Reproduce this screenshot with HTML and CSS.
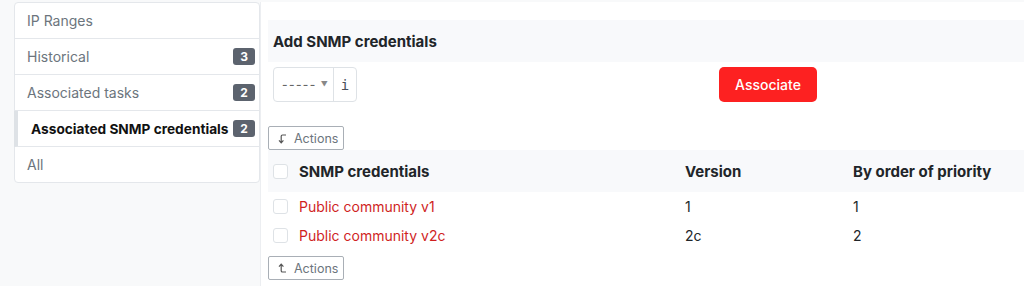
FILE: index.html
```html
<!DOCTYPE html>
<html lang="en">
<head>
  <meta charset="UTF-8" />
  <title>SNMP credentials</title>
  <link rel="stylesheet" href="styles.css">
</head>
<body>

<div class="layout">
  <!-- Side menu -->
  <div class="side">
    <div class="nav-list">
      <a class="nav-item" href="#">IP Ranges</a>
      <a class="nav-item" href="#">Historical <span class="badge">3</span></a>
      <a class="nav-item" href="#">Associated tasks <span class="badge">2</span></a>
      <a class="nav-item active" href="#">Associated SNMP credentials <span class="badge">2</span></a>
      <a class="nav-item" href="#">All</a>
    </div>
  </div>

  <!-- Main panel -->
  <div class="main">
    <div class="card-head">Add SNMP credentials</div>
    <div class="assoc-row">
      <div class="select-group">
        <div class="select"><span class="dashes">-----</span><span class="caret">&#9660;</span></div>
        <div class="info">i</div>
      </div>
      <div><button class="btn-red">Associate</button></div>
    </div>

    <button class="btn-actions top">
      <svg width="9" height="11" viewBox="0 0 9 11"><path d="M8 2H4.5Q3.2 2 3.2 3.3V9.6M1 7.4L3.2 9.8L5.4 7.4" fill="none" stroke="#555" stroke-width="1.2"/></svg>
      Actions
    </button>

    <table class="list">
      <tr class="head">
        <th class="chk"><span class="box"></span></th>
        <th class="c-name">SNMP credentials</th>
        <th class="c-ver">Version</th>
        <th>By order of priority</th>
      </tr>
      <tr>
        <td class="chk"><span class="box"></span></td>
        <td><a href="#">Public community v1</a></td>
        <td>1</td>
        <td>1</td>
      </tr>
      <tr>
        <td class="chk"><span class="box"></span></td>
        <td><a href="#">Public community v2c</a></td>
        <td>2c</td>
        <td>2</td>
      </tr>
    </table>

    <button class="btn-actions bottom">
      <svg width="9" height="11" viewBox="0 0 9 11"><path d="M3.2 1.2V7.7Q3.2 9 4.5 9H8M1 3.6L3.2 1.2L5.4 3.6" fill="none" stroke="#555" stroke-width="1.2"/></svg>
      Actions
    </button>
  </div>
</div>

</body>
</html>
```

FILE: styles.css
```css
body { background:#f8f9fa; color:#212529; font-family:Inter, "Noto Sans", sans-serif; margin:0; }
.layout { display:flex; padding-top:2px; }

.side { width:246px; margin-left:14px; flex-shrink:0; }
.nav-list { background:#fff; border:1px solid #e4e7eb; border-radius:4px; }
.nav-item { display:flex; justify-content:space-between; align-items:center; height:35px; padding:0 4px 0 12px; border-bottom:1px solid #e4e7eb; color:#6c757d; text-decoration:none; font-size:14px; white-space:nowrap; }
.nav-item:last-child { border-bottom:none; }
.nav-item.active { border-left:4px solid #dee2e6; margin-left:-1px; padding-left:13px; color:#111; font-weight:700; font-size:13.7px; }
.badge { background:#5c636e; color:#fff; font-size:12px; font-weight:700; border-radius:3px; width:22px; height:17px; display:flex; align-items:center; justify-content:center; }

.main { flex:1; background:#fff; border-left:1px solid #eceef1; padding:18px 0 0 7px; min-height:284px; box-sizing:border-box; }
.card-head { background:#f8f9fb; height:42px; padding-left:5px; display:flex; align-items:center; font-size:15px; font-weight:700; }

.assoc-row { display:grid; grid-template-columns:446px auto; padding:5px 0 0 5px; }
.select-group { display:flex; height:35px; width:84px; box-sizing:border-box; border:1px solid #dee2e6; border-radius:4px; }
.select { width:60px; display:flex; align-items:center; padding-left:8px; gap:4px; border-right:1px solid #dee2e6; box-sizing:border-box; }
.dashes { color:#666; font-size:12px; font-weight:500; letter-spacing:1.4px; }
.caret { font-size:7px; color:#888; }
.info { flex:1; display:flex; align-items:center; justify-content:center; font-family:"DejaVu Sans Mono", monospace; font-size:14px; color:#4a5058; }
.btn-red { background:#fd2121; color:#fff; border:none; border-radius:5px; width:98px; height:35px; font-family:Inter, sans-serif; font-size:14px; font-weight:500; }

.btn-actions { display:flex; align-items:center; gap:7px; height:24px; width:76px; padding:0 0 0 9px; background:#fff; border:1px solid #a9afb6; border-radius:2px; color:#6c757d; font-family:Inter, sans-serif; font-size:12.5px; }
.btn-actions.top { margin-top:24px; }
.btn-actions.bottom { margin-top:6px; }

.list { width:100%; border-collapse:collapse; font-size:14px; }
.list th { text-align:left; font-size:15px; font-weight:700; height:42px; padding:0; }
.list tr.head { background:#f8f9fb; }
.list td { height:29px; padding:0; }
.list a { color:#d01f1f; text-decoration:none; }
.chk { width:31px; padding-left:5px !important; box-sizing:border-box; }
.box { display:block; width:15px; height:15px; box-sizing:border-box; border:1px solid #dee2e6; border-radius:3px; background:#fff; }
.c-name { width:386px; }
.c-ver { width:168px; }
```
